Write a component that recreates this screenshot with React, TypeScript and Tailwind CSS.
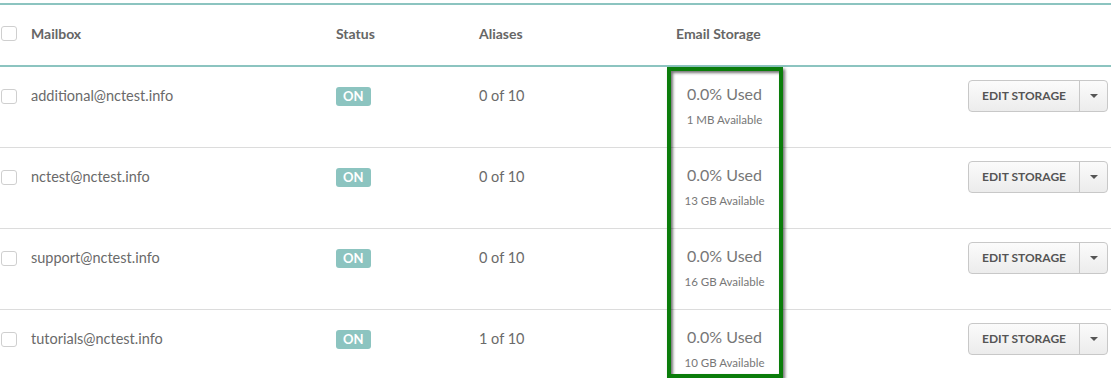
import React from "react";

const rows = [
  { email: "additional@nctest.info", aliases: "0 of 10", avail: "1 MB Available" },
  { email: "nctest@nctest.info", aliases: "0 of 10", avail: "13 GB Available" },
  { email: "support@nctest.info", aliases: "0 of 10", avail: "16 GB Available" },
  { email: "tutorials@nctest.info", aliases: "1 of 10", avail: "10 GB Available" },
];

const cols = "grid grid-cols-[31px_305px_143px_189px_114px_1fr]";

function Checkbox() {
  return <span className="block h-[15px] w-[16px] rounded-[3px] border border-[#cfcfcf] bg-white" />;
}

export default function App() {
  return (
    <div className="relative h-[378px] w-[1111px] overflow-hidden bg-white pt-[3px] font-['Lato',sans-serif] text-[#666]">
      <div className="border-y-2 border-[#8cc4c0]">
        <div className={`${cols} h-[60px] items-center pb-[3px] text-[14px] font-bold text-[#666]`}>
          <div className="pl-[1px]"><Checkbox /></div>
          <div>Mailbox</div>
          <div>Status</div>
          <div>Aliases</div>
          <div className="pl-[8px]">Email Storage</div>
          <div />
        </div>
      </div>

      {rows.map((r) => (
        <div key={r.email} className={`${cols} h-[81px] items-start border-b border-[#dcdcdc] pt-[13px]`}>
          <div className="flex h-[32px] items-center pl-[1px]"><Checkbox /></div>
          <div className="flex h-[32px] items-center text-[14.5px] text-[#6a6a6a]">{r.email}</div>
          <div className="flex h-[32px] items-center">
            <span className="rounded-[3px] bg-[#8cc4c0] px-[7px] py-[2px] text-[13px] font-bold leading-[15px] text-white">ON</span>
          </div>
          <div className="flex h-[32px] items-center text-[14.5px] text-[#6a6a6a]">{r.aliases}</div>
          <div className="flex flex-col items-center pt-[4px] pr-[1px]">
            <span className="text-[16px] leading-[20px] text-[#777]">0.0% Used</span>
            <span className="mt-[9px] text-[11.5px] leading-[14px] text-[#777]">{r.avail}</span>
          </div>
          <div className="flex justify-end pr-[3px]">
            <div className="flex h-[32px] rounded-[4px] border border-[#c8c8c8] bg-gradient-to-b from-[#fbfbfb] to-[#ececec]">
              <span className="flex items-center border-r border-[#c8c8c8] px-[13px] text-[12px] font-bold text-[#555]">EDIT STORAGE</span>
              <span className="flex w-[27px] items-center justify-center">
                <span className="h-0 w-0 border-x-[4px] border-t-[4px] border-x-transparent border-t-[#555]" />
              </span>
            </div>
          </div>
        </div>
      ))}

      <div className="absolute left-[667px] top-[67px] h-[311px] w-[116px] border-4 border-[#0b7d0b] shadow-[2px_2px_3px_rgba(0,0,0,0.55),inset_2px_2px_3px_rgba(0,0,0,0.55)]" />
    </div>
  );
}
